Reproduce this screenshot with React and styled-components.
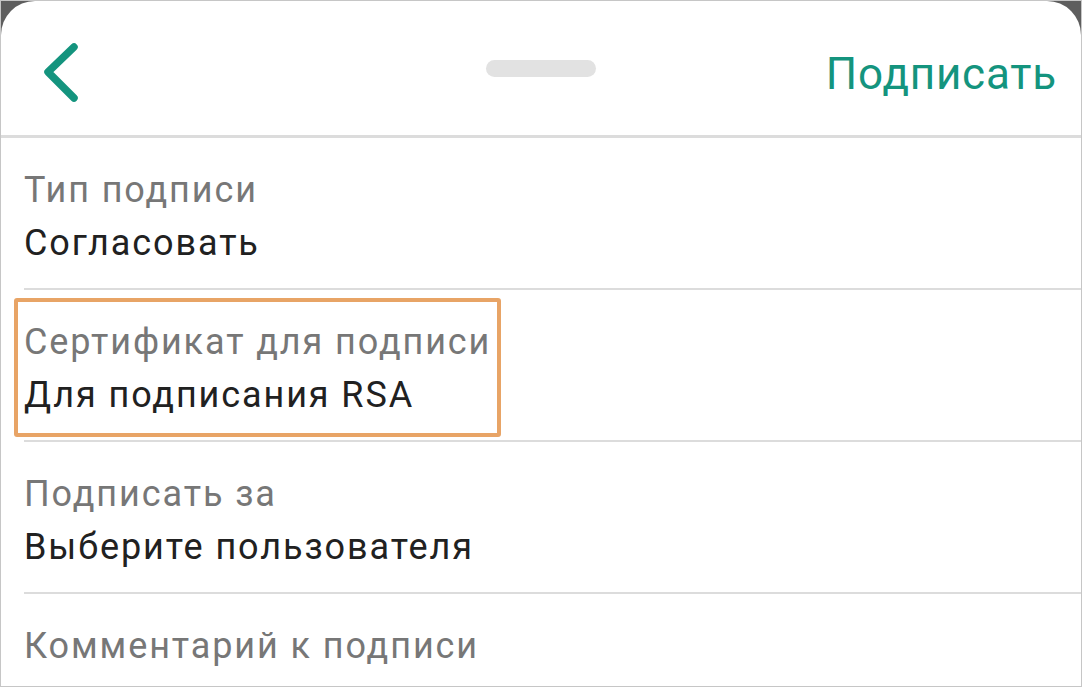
import styled, { createGlobalStyle } from "styled-components";

const GlobalStyle = createGlobalStyle`
  html, body {
    margin: 0;
    padding: 0;
    background: #ffffff;
  }
  body {
    font-family: Roboto, "Noto Sans", sans-serif;
  }
`;

const Frame = styled.div`
  width: 1082px;
  height: 687px;
  box-sizing: border-box;
  border: 1px solid #c6c6c6;
  background: #5e5e5e;
  overflow: hidden;
`;

const Sheet = styled.div`
  height: 100%;
  background: #ffffff;
  border-radius: 34px 34px 0 0;
  display: flex;
  flex-direction: column;
`;

const Header = styled.header`
  height: 134px;
  flex-shrink: 0;
  display: grid;
  grid-template-columns: 1fr auto 1fr;
  align-items: center;
  border-bottom: 3px solid #dcdcdc;
`;

const BackButton = styled.button`
  justify-self: start;
  margin: 4px 0 0 38px;
  padding: 0;
  border: none;
  background: none;
  display: flex;
  cursor: pointer;
`;

const Handle = styled.div`
  width: 110px;
  height: 17px;
  border-radius: 9px;
  background: #e2e2e2;
`;

const Action = styled.button`
  justify-self: end;
  margin: 12px 24px 0 0;
  padding: 0;
  border: none;
  background: none;
  font-family: Roboto, sans-serif;
  font-size: 44px;
  letter-spacing: 0.8px;
  color: #14947e;
  cursor: pointer;
`;

const List = styled.div`
  padding-left: 23px;
`;

const Row = styled.div`
  position: relative;
  padding: 26px 0 ${(p) => (p.$last ? "0" : "18px")};
  border-bottom: ${(p) => (p.$last ? "none" : "2px solid #dcdcdc")};
`;

const Label = styled.div`
  font-size: 36px;
  line-height: 53px;
  letter-spacing: 1.9px;
  color: #777777;
`;

const Value = styled.div`
  font-size: 36px;
  line-height: 53px;
  letter-spacing: 1.9px;
  color: #212121;
`;

const Highlight = styled.div`
  position: absolute;
  left: -10px;
  top: 8px;
  width: 487px;
  height: 139px;
  box-sizing: border-box;
  border: 4px solid #e8a466;
  border-radius: 3px;
  pointer-events: none;
`;

const fields = [
  { label: "Тип подписи", value: "Согласовать" },
  { label: "Сертификат для подписи", value: "Для подписания RSA", marked: true },
  { label: "Подписать за", value: "Выберите пользователя" },
  { label: "Комментарий к подписи" },
];

export default function App() {
  return (
    <Frame>
      <GlobalStyle />
      <Sheet>
        <Header>
          <BackButton aria-label="Назад">
            <svg width="44" height="64" viewBox="0 0 44 64">
              <polyline
                points="35,9 9,34 35,60"
                fill="none"
                stroke="#14947e"
                strokeWidth="7.5"
                strokeLinecap="round"
                strokeLinejoin="round"
              />
            </svg>
          </BackButton>
          <Handle />
          <Action>Подписать</Action>
        </Header>
        <List>
          {fields.map((f, i) => (
            <Row key={f.label} $last={i === fields.length - 1}>
              {f.marked && <Highlight />}
              <Label>{f.label}</Label>
              {f.value && <Value>{f.value}</Value>}
            </Row>
          ))}
        </List>
      </Sheet>
    </Frame>
  );
}
